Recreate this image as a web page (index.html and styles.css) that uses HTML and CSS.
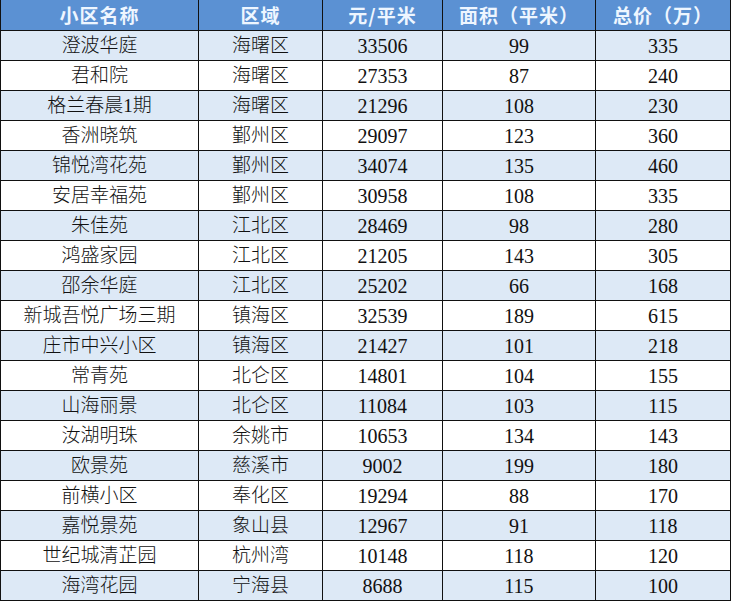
FILE: index.html
```html
<!DOCTYPE html>
<html lang="zh">
<head>
<meta charset="utf-8">
<link rel="stylesheet" href="styles.css">
</head>
<body>
<table class="price-table">
  <colgroup>
    <col class="c1"><col class="c2"><col class="c3"><col class="c4"><col class="c5">
  </colgroup>
  <thead>
    <tr><th>小区名称</th><th>区域</th><th>元/平米</th><th>面积（平米）</th><th>总价（万）</th></tr>
  </thead>
  <tbody>
    <tr><td>澄波华庭</td><td>海曙区</td><td class="num">33506</td><td class="num">99</td><td class="num">335</td></tr>
    <tr><td>君和院</td><td>海曙区</td><td class="num">27353</td><td class="num">87</td><td class="num">240</td></tr>
    <tr><td>格兰春晨1期</td><td>海曙区</td><td class="num">21296</td><td class="num">108</td><td class="num">230</td></tr>
    <tr><td>香洲晓筑</td><td>鄞州区</td><td class="num">29097</td><td class="num">123</td><td class="num">360</td></tr>
    <tr><td>锦悦湾花苑</td><td>鄞州区</td><td class="num">34074</td><td class="num">135</td><td class="num">460</td></tr>
    <tr><td>安居幸福苑</td><td>鄞州区</td><td class="num">30958</td><td class="num">108</td><td class="num">335</td></tr>
    <tr><td>朱佳苑</td><td>江北区</td><td class="num">28469</td><td class="num">98</td><td class="num">280</td></tr>
    <tr><td>鸿盛家园</td><td>江北区</td><td class="num">21205</td><td class="num">143</td><td class="num">305</td></tr>
    <tr><td>邵余华庭</td><td>江北区</td><td class="num">25202</td><td class="num">66</td><td class="num">168</td></tr>
    <tr><td>新城吾悦广场三期</td><td>镇海区</td><td class="num">32539</td><td class="num">189</td><td class="num">615</td></tr>
    <tr><td>庄市中兴小区</td><td>镇海区</td><td class="num">21427</td><td class="num">101</td><td class="num">218</td></tr>
    <tr><td>常青苑</td><td>北仑区</td><td class="num">14801</td><td class="num">104</td><td class="num">155</td></tr>
    <tr><td>山海丽景</td><td>北仑区</td><td class="num">11084</td><td class="num">103</td><td class="num">115</td></tr>
    <tr><td>汝湖明珠</td><td>余姚市</td><td class="num">10653</td><td class="num">134</td><td class="num">143</td></tr>
    <tr><td>欧景苑</td><td>慈溪市</td><td class="num">9002</td><td class="num">199</td><td class="num">180</td></tr>
    <tr><td>前横小区</td><td>奉化区</td><td class="num">19294</td><td class="num">88</td><td class="num">170</td></tr>
    <tr><td>嘉悦景苑</td><td>象山县</td><td class="num">12967</td><td class="num">91</td><td class="num">118</td></tr>
    <tr><td>世纪城清芷园</td><td>杭州湾</td><td class="num">10148</td><td class="num">118</td><td class="num">120</td></tr>
    <tr><td>海湾花园</td><td>宁海县</td><td class="num">8688</td><td class="num">115</td><td class="num">100</td></tr>
  </tbody>
</table>
</body>
</html>
```

FILE: styles.css
```css
html, body {
  margin: 0;
  padding: 0;
  background: #ffffff;
}

.price-table {
  border-collapse: collapse;
  table-layout: fixed;
  width: 730px;
  font-family: "Liberation Serif", "Noto Sans CJK SC", serif;
  font-size: 19px;
  color: #111;
}

.c1 { width: 198px; }
.c2 { width: 124px; }
.c3 { width: 120px; }
.c4 { width: 153px; }
.c5 { width: 135px; }

.price-table th,
.price-table td {
  border: 1px solid #111;
  height: 28px;
  padding: 1px 0 0;
  text-align: center;
  vertical-align: middle;
  line-height: 28px;
  white-space: nowrap;
  overflow: hidden;
}

.price-table th {
  height: 30px;
  padding: 0;
  line-height: 30px;
  background: #5b91d3;
  color: #eef6ff;
  font-family: "Noto Sans CJK SC", sans-serif;
  font-weight: 700;
  font-size: 19px;
  letter-spacing: 1px;
  border-top: none;
}

.price-table td {
  font-weight: 300;
}

.price-table td.num {
  font-size: 20px;
  font-weight: 400;
}

.price-table tbody tr:nth-child(odd) td {
  background: #dde9f6;
}

.price-table tbody tr:nth-child(even) td {
  background: #ffffff;
}
```
